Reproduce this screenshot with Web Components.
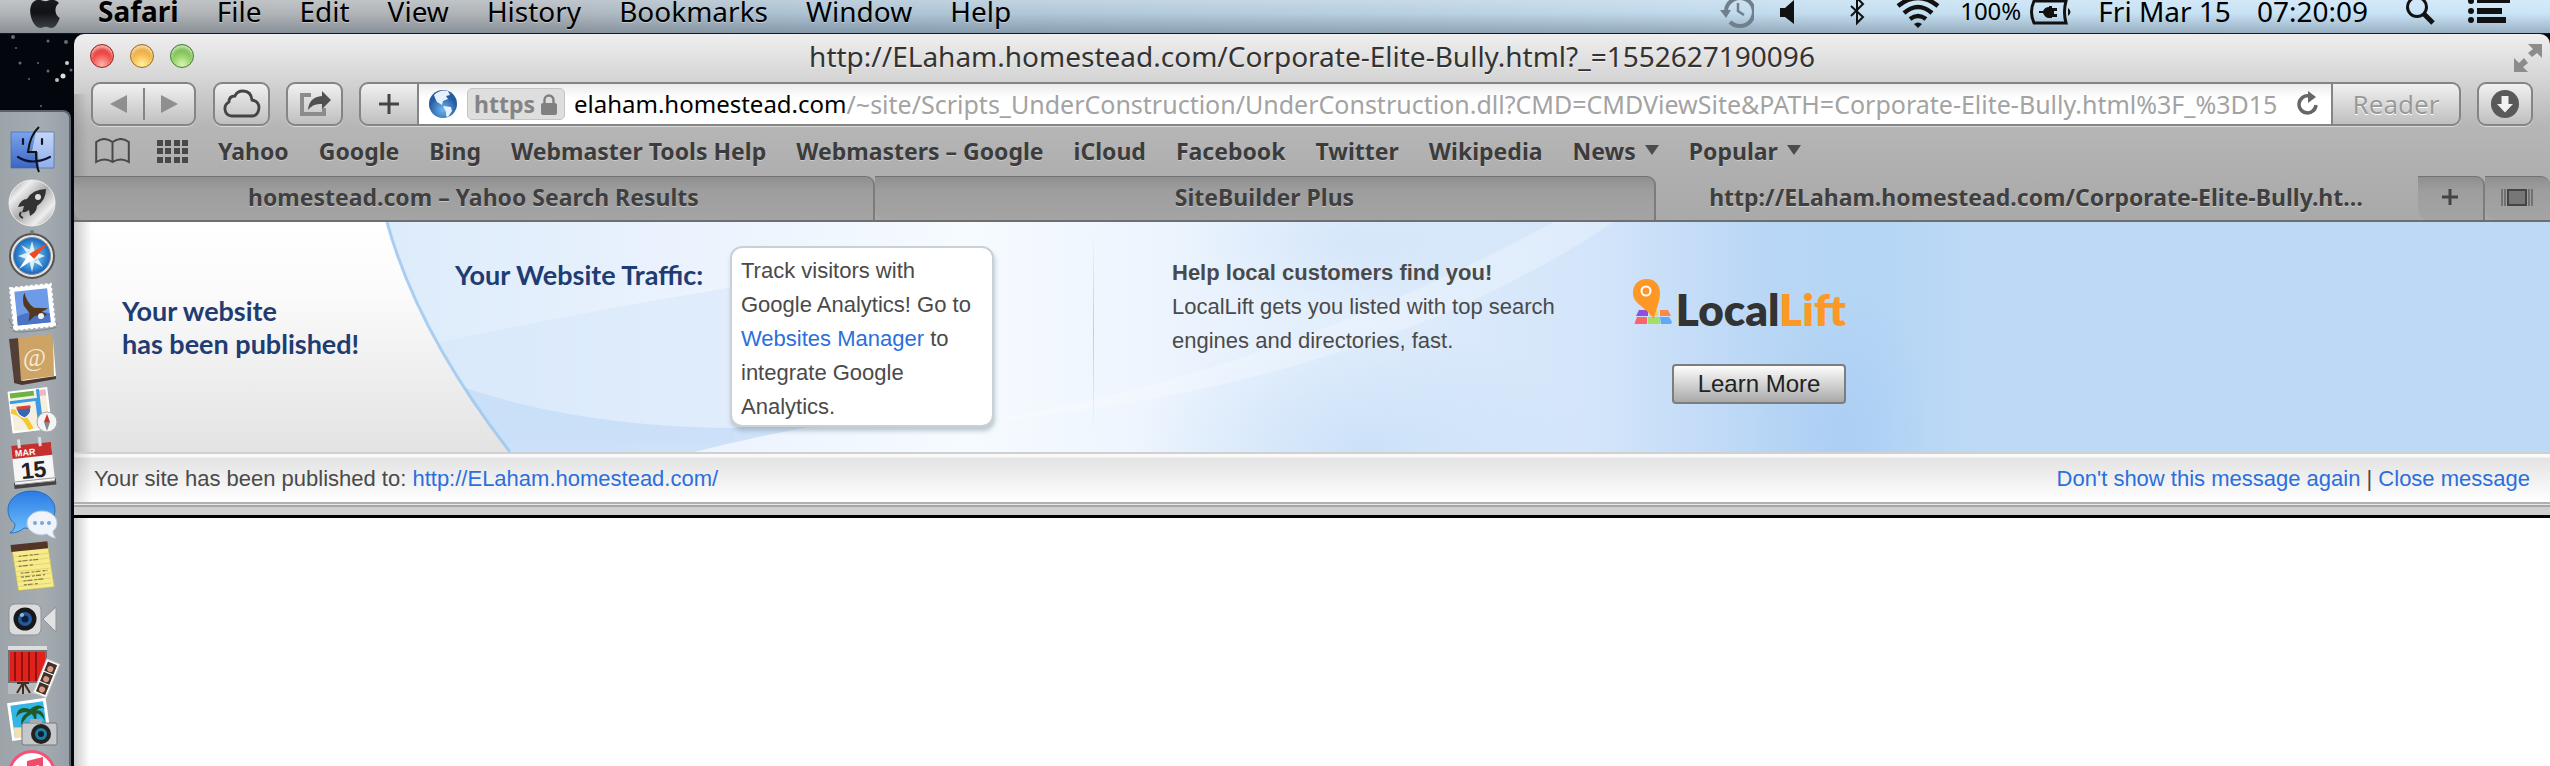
<!DOCTYPE html>
<html lang="en">
<head>
<meta charset="utf-8">
<title>Corporate Elite Bully</title>
<style>
html,body{margin:0;height:100%;overflow:hidden}
body{font-family:"Noto Sans","Open Sans",sans-serif;color:#000;background:#03070d}
</style>
</head>
<body>
<mac-desktop></mac-desktop>
<script>
function define(name, html){
  const tpl = document.createElement('template');
  tpl.innerHTML = html;
  customElements.define(name, class extends HTMLElement{
    constructor(){
      super();
      this.attachShadow({mode:'open'}).append(tpl.content.cloneNode(true));
    }
  });
}

/* ---------- menu bar ---------- */
define('menu-item', `
<style>
:host{display:block}
button{all:unset;display:block;font-size:28px;line-height:22px;white-space:nowrap;text-shadow:0 1px 0 #ffffff66}
:host([strong]) button{font-weight:700}
</style>
<button type="button"><slot></slot></button>`);

define('mac-menubar', `
<style>
:host{display:flex;align-items:flex-start;height:33px;border-bottom:1px solid #10182c;
 background:linear-gradient(#fff3 0,#fff0 40%,#2a38484d 100%),linear-gradient(90deg,#b2b5b8 0,#b0b5ba 20%,#acc3d4 32%,#b9d0e0 55%,#c3def0 72%,#cbe5f8 100%)}
nav{display:flex;gap:38px;padding-left:37px}
.status{display:flex;margin-left:auto;padding-right:40px}
svg{display:block;flex:none}
.apple{margin-left:30px}
.time{display:flex;gap:26px;font-size:28px;line-height:22px;white-space:nowrap;padding-left:26px}
.pct{font-size:24px;line-height:22px;padding:0 8px 0 20px}
.gap{padding-left:38px}
</style>
<svg class="apple" width="31" height="33" viewBox="0 0 31 33"><defs><linearGradient id="a" x2="0" y2="1"><stop offset="0" stop-color="#1a1c20"/><stop offset=".45" stop-color="#101216"/><stop offset="1" stop-color="#3b4046"/></linearGradient></defs><path fill="url(#a)" d="M29 3C27 1 25-.2 22-.2c-3 0-4 1.400-6.500 1.400S11-.2 8.500-.2C3 0 .2 5 .2 11c0 8 5 17 10 17 2.200 0 3-1.300 5.600-1.300S19 28 21.500 28c3.500 0 6.500-5 8.200-10-5-2.500-6-11-.7-15z"/></svg>
<nav>
<menu-item strong>Safari</menu-item><menu-item>File</menu-item><menu-item>Edit</menu-item><menu-item>View</menu-item><menu-item>History</menu-item><menu-item>Bookmarks</menu-item><menu-item>Window</menu-item><menu-item>Help</menu-item>
</nav>
<div class="status">
<svg width="34" height="33" viewBox="0 0 34 33" fill="none" stroke="#6f7f8c" stroke-width="4"><path d="M6 10A14 14 0 1 1 10 22"/><path d="M0 10h11l-5 8z" fill="#6f7f8c" stroke="none"/><path d="M18 3v8l6 4" stroke-width="2.500"/></svg>
<svg width="96" height="33" viewBox="0 0 96 33"><path fill="#111" d="M26 8h5l9-8v24l-9-7h-5z"/></svg>
<svg width="15" height="33" viewBox="0 0 15 33" fill="none" stroke="#111" stroke-width="2"><path d="M1 6l12 11-6 6V-2l6 6L1 16"/></svg>
<svg width="75" height="33" viewBox="0 0 75 33" fill="none" stroke="#111" stroke-width="4.500"><path d="M33 6Q53-10 73 6M39 13Q53 1 67 13M45 19Q53 13 61 19"/><path d="M49 24q4-3 8 0l-4 4z" fill="#111" stroke="none"/></svg>
<span class="pct">100%</span>
<svg width="43" height="33" viewBox="0 0 43 33"><path d="M5 1h32q-3 11 0 22H5q-5-11 0-22z" fill="none" stroke="#111" stroke-width="3"/><path fill="#111" d="M10 11h4q2-4 6-4v-1h3v2h5v3h-3v3h3v3h-5v1h-3q-4 0-6-5h-4zM39 8q5 4 0 8z"/></svg>
<span class="time"><span>Fri Mar 15</span><span>07:20:09</span></span>
<span class="gap"><svg width="30" height="33" viewBox="0 0 30 33" fill="none" stroke="#111"><circle cx="11" cy="7" r="9.500" stroke-width="3"/><path d="M18 14l9 9" stroke-width="5"/></svg></span>
<svg width="74" height="33" viewBox="0 0 74 33" fill="#111"><path d="M41-2h33v5H41zM41 8h25v6H41zM41 17h29v6H41z"/><circle cx="35" cy="1" r="3"/><circle cx="35" cy="11" r="3"/><circle cx="35" cy="20" r="3"/></svg>
</div>`);

/* ---------- dock ---------- */
define('mac-dock', `
<style>
:host{display:flex;flex-direction:column;width:74px;flex:none;background:#03070d}
.sky{height:76px;flex:none;display:block}
.shelf{flex:1;width:69px;border:solid #5a6168;border-width:2px 2px 0 0;border-radius:0 8px 0 0;
 background:linear-gradient(90deg,#9ca3a9,#a5acb1 60%,#98a0a7);padding-top:13px;overflow:hidden}
.shelf svg{display:block;width:52px;height:52px;margin-left:6px;overflow:visible}
</style>
<svg class="sky" width="74" height="76" viewBox="0 34 74 76" fill="#8d949c"><g opacity=".7"><circle cx="13" cy="37" r="2"/><circle cx="48" cy="41" r="1.500"/><circle cx="66" cy="42" r="2"/><circle cx="16" cy="48" r="1"/><circle cx="20" cy="63" r="1.500"/><circle cx="38" cy="63" r="1"/><circle cx="48" cy="71" r="1.500"/><circle cx="71" cy="70" r="1.500"/><circle cx="41" cy="106" r="1"/><circle cx="29" cy="79" r="1"/></g><circle cx="67" cy="63" r="2" fill="#ccc"/><circle cx="63" cy="76" r="2.500" fill="#ddd"/><circle cx="57" cy="80" r="2" fill="#bbb"/></svg>
<div class="shelf">
<svg viewBox="0 0 52 52"><defs><linearGradient id="f1" x2="0" y2="1"><stop offset="0" stop-color="#7aa4ec"/><stop offset="1" stop-color="#3c66c4"/></linearGradient><linearGradient id="f2" x2="0" y2="1"><stop offset="0" stop-color="#c4d6f6"/><stop offset="1" stop-color="#8fb0ea"/></linearGradient></defs><path fill="url(#f1)" d="M5 7h25l-4 20h6l1 16H5z"/><path fill="url(#f2)" d="M30 7h18v36H33l-1-16h-6z"/><path d="M5 7h43v36H5z" fill="none" stroke="#3a62b4" stroke-width=".6"/><path d="M33 2q-9 8-11 25h8q0 14 3 20" fill="none" stroke="#111" stroke-width="2"/><path d="M12 32q14 9 32 0M17 14v5M36 14v5" fill="none" stroke="#0d1430" stroke-width="2.200" stroke-linecap="round"/></svg>
<svg viewBox="0 0 52 52"><defs><linearGradient id="l" x2="1" y2="1"><stop offset="0" stop-color="#888"/><stop offset=".25" stop-color="#eee"/><stop offset=".5" stop-color="#aaa"/><stop offset=".75" stop-color="#eee"/><stop offset="1" stop-color="#888"/></linearGradient></defs><circle cx="26" cy="26" r="23" fill="url(#l)" stroke="#eee"/><path fill="#333" d="M40 12q-13 0-19 10-6 0-9 8l6-1q-1 4-2 6 3 1 7-2l1 6q7-4 7-10 9-6 9-17z"/><circle cx="32" cy="20" r="3" fill="#ddd"/><path d="M15 35q-3 4 2 6" fill="none" stroke="#333" stroke-width="2"/></svg>
<svg viewBox="0 0 52 52"><defs><radialGradient id="s"><stop offset="0" stop-color="#8fe0f8"/><stop offset="1" stop-color="#1465c0"/></radialGradient></defs><circle cx="26" cy="27" r="22" fill="#e4e4e4" stroke="#555" stroke-width="2"/><circle cx="26" cy="27" r="18.500" fill="url(#s)" stroke="#888"/><path fill="#fff" opacity=".8" d="M26 12l3 11 10 4-10 4-3 12-3-12-11-4 11-4zM15 16l9 5-3 3zM37 38l-9-5 4-3z"/><path fill="#ee4b22" d="M42 14L23 25l5 5z"/><path fill="#fff" d="M13 40l10-15 5 5z"/><circle cx="26" cy="3" r="2" fill="#777"/></svg>
<svg viewBox="0 0 52 52"><g transform="rotate(-6 26 26)"><path fill="none" stroke="#7f8790" d="M2 35a12 12 0 1 0 10-12M2 44q12 5 48 1M4 48q14 4 44 1"/><path d="M6 5h41v42H6z" fill="#fff" stroke="#fff" stroke-width="2" stroke-dasharray="3 2"/><path d="M10 9h33v34H10z" fill="#6d9be8"/><path d="M10 34q16-6 33 0v9H10z" fill="#4a74c6"/><path fill="#53381f" d="M20 11q1 10 8 16l14 2-7 3q5 2 5 4l-12-1-7 5 2-8-5-8q-1-9 2-13z"/><circle cx="34" cy="36" r="3" fill="#eee"/></g></svg>
<svg viewBox="0 0 52 52"><path fill="#543f36" d="M3 6l11-1 3 45-9-2z"/><path fill="#cda466" d="M12 5l34-4 3 43-34 4z"/><path fill="#fff" d="M47 6l3 38-33 5v-2l31-4z"/><path fill="#4d382f" d="M8 47l8 1 34-5v3l-34 6-8-2z"/><text x="17" y="33" font-family="Liberation Serif" font-size="25" fill="#f4ead6">@</text></svg>
<svg viewBox="0 0 52 52"><g transform="rotate(-7 26 26)"><path fill="#f4efdf" stroke="#fff" stroke-width="2" d="M5 5h38v40H5z"/><path fill="#6cb344" d="M6 6h24v5H6z"/><path fill="#e9b9c8" d="M35 6h7v6h-7z"/><path d="M5 15h27v24M34 5v40" fill="none" stroke="#3d9be0" stroke-width="3"/><path d="M5 24q12 2 18 20" fill="none" stroke="#f7c72f" stroke-width="5"/><path fill="#3867b4" stroke="#fff" d="M11 21h14q1 8-7 11-8-3-7-11z"/><path fill="#d94336" d="M11 20h14v3H11z"/></g><circle cx="41" cy="37" r="10" fill="#f4f4f4" stroke="#aaa"/><path fill="#d9302a" d="M41 29l3 8h-6z"/><path fill="#888" d="M41 46l3-9h-6z"/></svg>
<svg viewBox="0 0 52 52"><g transform="rotate(-6 26 26)"><path fill="#444" d="M6 44l42 0v6H6z"/><path fill="#f6f6f6" d="M7 8h40v38H7z"/><path fill="#c4302f" d="M7 7h40v13H7z"/><path d="M15 1v9M36 1v9" stroke="#ddd" stroke-width="3"/><path d="M7 43h40M7 46h40" stroke="#999"/><text x="10" y="18" font-family="Liberation Sans" font-size="9" font-weight="700" fill="#fff">MAR</text><text x="14" y="41" font-family="Liberation Sans" font-size="23" font-weight="700" fill="#222">15</text></g></svg>
<svg viewBox="0 0 52 52"><defs><linearGradient id="m" x2="0" y2="1"><stop offset="0" stop-color="#2a7be6"/><stop offset="1" stop-color="#6fc0fa"/></linearGradient></defs><path fill="url(#m)" stroke="#1d5fb8" stroke-width=".8" d="M26 2C12 2 2 10 2 21c0 6 3 11 7 14 0 4-2 7-5 9 6 0 11-2 14-5 20 3 31-7 31-18S39 2 26 2z"/><path fill="#eef4fa" stroke="#b8c8d8" d="M36 22c-9 0-15 6-15 12s6 12 15 12l5-1c2 2 5 4 9 4-2-2-3-4-3-7 3-2 4-5 4-8 0-6-6-12-15-12z"/><g fill="#7da7d4"><circle cx="29" cy="34" r="2"/><circle cx="36" cy="34" r="2"/><circle cx="43" cy="34" r="2"/></g></svg>
<svg viewBox="0 0 52 52"><g transform="rotate(-6 26 26)"><path fill="#f7ec8a" stroke="#c8b84e" stroke-width=".6" d="M8 6h36l2 42H10z"/><path fill="#54352a" d="M7 2h37v7H7z"/><path d="M10 14h34M10 19h34M10 24h34M10 29h34M10 34h34M10 39h34M10 44h34" stroke="#d9cb70" stroke-width=".7"/><path d="M14 14h22M13 19h20M13 24h14M14 31h27M14 35h24M16 39h20M16 43h14" stroke="#8a7c48" stroke-width="1.200" stroke-dasharray="3 1 5 2"/></g></svg>
<svg viewBox="0 0 52 52"><rect x="3" y="11" width="32" height="31" rx="6" fill="#dcdcdc" stroke="#8d9195"/><path fill="#e2e2e2" stroke="#8d9195" d="M37 26l13-12v25z"/><circle cx="19" cy="26" r="11.500" fill="#17181c"/><circle cx="19" cy="26" r="7" fill="#245a9a"/><circle cx="19" cy="26" r="3.500" fill="#0d1f3c"/><circle cx="16" cy="22" r="2" fill="#8fb9e6"/></svg>
<svg viewBox="0 0 52 52"><path fill="#6e7175" d="M2 1h39v47H2z"/><path fill="#b9bcbf" d="M2 38h39v11H2z"/><path fill="#e0221c" d="M4 7h35v29H4z"/><path d="M9 7v29M16 7v29M23 7v29M30 7v29" stroke="#94100d" stroke-width="2"/><path fill="#ddd" d="M2 1h39v4H2z"/><path d="M11 38h12M17 38l-6 10M18 38l6 10M17 38v11" stroke="#442d1d" stroke-width="2"/><g transform="rotate(22 40 32)"><path fill="#fff" stroke="#ccc" d="M34 15h14v36H34z"/><path fill="#44302b" d="M36 17h10v10H36zM36 28h10v10H36zM36 39h10v10H36z"/><g fill="#d79c84"><circle cx="41" cy="23" r="3"/><circle cx="41" cy="34" r="3"/><circle cx="41" cy="45" r="3"/></g></g></svg>
<svg viewBox="0 0 52 52"><g transform="rotate(-8 26 26)"><path fill="#fff" d="M4 3h39v38H4z"/><path fill="#35b4e6" d="M7 6h33v32H7z"/><path fill="#f0dfb0" d="M7 28l33 4v7H7z"/><path fill="#1e5a2a" d="M26 12q-12-6-15 6 5-5 12-3-8 3-8 12 5-8 12-10 3 4 2 14l3-14q5 2 7 9 1-12-7-12 6-3 9 0-5-8-15-2z"/></g><rect x="16" y="26" width="35" height="22" rx="2" fill="#c4c8cb" stroke="#777"/><path fill="#a6abaf" d="M24 22h12v4H24z"/><circle cx="35" cy="37" r="10" fill="#222"/><circle cx="35" cy="37" r="6" fill="#1f7da0"/><circle cx="35" cy="37" r="3" fill="#0a2030"/></svg>
<svg viewBox="0 0 52 52"><circle cx="26" cy="25" r="22.500" fill="#fff" stroke="#f4527a" stroke-width="3"/><path fill="#ef4b6c" d="M21 12l16-4v22h-4V16l-9 2v16h-3z"/></svg>
</div>`);

/* ---------- toolbar pieces ---------- */
define('tool-button', `
<style>
:host{display:block;flex:none}
button{box-sizing:border-box;display:flex;align-items:center;justify-content:center;height:44px;width:100%;margin:0;padding:0;
 border:2px solid #858585;border-radius:9px;background:linear-gradient(#f1f1f1,#bfbfbf);box-shadow:0 1px 0 #ffffff80;font:inherit}
:host([start]) button{border-radius:9px 0 0 9px}
:host([end]) button{border-radius:0 9px 9px 0}
</style>
<button type="button"><slot></slot></button>`);

define('bookmark-link', `
<style>
:host{display:block}
a{display:flex;align-items:center;gap:9px;color:#3c3c3c;text-decoration:none;font-size:23px;font-weight:700;line-height:30px;white-space:nowrap;text-shadow:0 1px 0 #ffffff59}
svg{display:none;margin-top:-2px}
:host([menu]) svg{display:block}
</style>
<a href="#"><slot></slot><svg width="14" height="10" viewBox="0 0 14 10"><path d="M0 0h14L7 10z" fill="#4c4c4c"/></svg></a>`);

define('browser-tab', `
<style>
:host{display:flex;min-width:0;box-sizing:border-box;align-items:center;justify-content:center;height:44px;padding-bottom:3px;
 border-top:1px solid #727272;border-right:2px solid #7c7c7c;border-radius:0 9px 0 10px;
 background:linear-gradient(#8f8f8f,#9e9e9e 14px,#a4a4a4)}
:host([active]){background:none;border-color:transparent}
button{all:unset;color:#3f3f3f;font-size:23px;font-weight:700;line-height:32px;white-space:nowrap;overflow:hidden;text-overflow:ellipsis;text-shadow:0 1px 0 #ffffff66}
::slotted(svg){display:block}
</style>
<button type="button"><slot></slot></button>`);

define('safari-chrome', `
<style>
:host{display:block;height:188px;border-radius:10px 10px 0 0;
 background:linear-gradient(90deg,#0002,#0000 14px) 0 60px no-repeat,linear-gradient(#efefef 0,#d3d3d3 48px,#b6b6b6 92px,#adadad 150px,#a9a9a9 100%);overflow:hidden}
svg{display:block;flex:none}
.title{display:grid;grid-template-columns:1fr auto 1fr;align-items:center;height:48px}
.lights{display:flex;gap:16px;padding-left:16px;margin-top:-4px}
.lights button{box-sizing:border-box;width:24px;height:24px;padding:0;border-radius:50%;border:1px solid}
.r{background:radial-gradient(circle at 50% 90%,#ffb4ad,#ef4a47 50%,#d93a3a);border-color:#9c2626!important;box-shadow:inset 0 3px 3px #fff9}
.y{background:radial-gradient(circle at 50% 90%,#fff2a4,#f3b84a 50%,#db9433);border-color:#a06a20!important;box-shadow:inset 0 3px 3px #fff9}
.g{background:radial-gradient(circle at 50% 90%,#d7f5b0,#8bcb60 50%,#62a944);border-color:#47812d!important;box-shadow:inset 0 3px 3px #fff9}
h1{margin:0;margin-top:-4px;font-size:28px;font-weight:400;line-height:40px;color:#333;text-shadow:0 1px 0 #ffffff99;white-space:nowrap}
.full{justify-self:end;padding-right:8px}
.tools{display:flex;padding:0 17px;height:44px}
.back{width:105px;margin-right:17px}.w58{width:57px;margin-right:16px}.plus{width:60px}.reader{width:130px;margin-right:16px}.dl{width:56px}
.field{flex:1;min-width:0;box-sizing:border-box;display:flex;align-items:center;height:44px;border:solid #858585;border-width:2px 0;
 background:linear-gradient(#ececec,#fff 14px);padding:0 12px 0 10px;box-shadow:0 1px 0 #ffffff80}
.https{display:flex;align-items:center;gap:6px;box-sizing:border-box;height:32px;margin-left:10px;padding:0 7px 0 6px;border:1px solid #c4c4c4;border-radius:5px;background:#dedede;color:#848484;font-size:23px;font-weight:700}
label{margin-left:9px;font-size:24px;line-height:36px}
input{flex:1;min-width:0;border:0;padding:0;margin:0 14px 0 0;background:none;outline:0;font:inherit;font-size:25px;line-height:36px;height:36px;color:#a3a3a3}
.rd{font-size:26px;color:#9a9a9a;text-shadow:0 1px 0 #fff}
.marks{display:flex;align-items:center;height:50px;padding-left:21px}
.grid{margin:0 30px 0 27px}
.list{display:flex;gap:30px}
.tabs{display:flex;height:44px;border-bottom:2px solid #6e6e6e}
.t1{flex:41}.t2{flex:40}.t3{flex:39}.t4{width:67px}.t5{width:65px;border-right:0}
</style>
<div class="title">
 <div class="lights"><button class="r" aria-label="Close"></button><button class="y" aria-label="Minimise"></button><button class="g" aria-label="Zoom"></button></div>
 <h1>http://ELaham.homestead.com/Corporate-Elite-Bully.html?_=1552627190096</h1>
 <svg class="full" width="28" height="30" viewBox="0 0 28 30" fill="#8c8c8c"><path d="M14 1h14v14l-5-5-5 4-4-4 5-4zM0 15l5 5 5-5 4 5-5 4 5 5H0z"/></svg>
</div>
<div class="tools">
 <tool-button class="back"><svg width="72" height="34" viewBox="0 0 72 34"><path d="M19 8v18L2 17zM53 8v18l17-9z" fill="#8f8f8f"/><path d="M36 1v32" stroke="#858585" stroke-width="2"/></svg></tool-button>
 <tool-button class="w58"><svg width="40" height="30" viewBox="0 0 40 30"><path d="M9 27a7.500 7.500 0 0 1-2-14q0-6 6-6 2-5 8-5 8 0 9 9 7 1 7 8-1 8-7 8z" fill="none" stroke="#444" stroke-width="2.800"/></svg></tool-button>
 <tool-button class="w58"><svg width="34" height="30" viewBox="0 0 34 30"><path d="M13 6H4v19h22v-6" fill="none" stroke="#8c8c8c" stroke-width="4"/><path d="M24 2l9 9-9 9v-5q-9-1-14 6 1-13 14-14z" fill="#505050"/></svg></tool-button>
 <tool-button class="plus" start><svg width="22" height="22" viewBox="0 0 22 22"><path d="M11 1v20M1 11h20" stroke="#454545" stroke-width="3"/></svg></tool-button>
 <div class="field">
  <svg width="28" height="30" viewBox="0 0 28 30"><defs><radialGradient id="g" cy=".7"><stop offset="0" stop-color="#6db8f6"/><stop offset="1" stop-color="#245b9f"/></radialGradient></defs><circle cx="14" cy="15" r="14" fill="url(#g)"/><path fill="#e6f1fb" d="M5 6q6-6 14-4l2 4-4 1 2 3-5 2-1 4-5-3-2-4zM14 17l8 1 1 4-4 6-2-1v-4z"/></svg>
  <span class="https">https<svg width="16" height="21" viewBox="0 0 16 21"><rect y="9" width="16" height="12" rx="2" fill="#808080"/><path d="M3.500 10V6a4.500 4.500 0 0 1 9 0v4" fill="none" stroke="#808080" stroke-width="2.400"/></svg></span>
  <label for="u">elaham.homestead.com</label><input id="u" type="text" value="/~site/Scripts_UnderConstruction/UnderConstruction.dll?CMD=CMDViewSite&amp;PATH=Corporate-Elite-Bully.html%3F_%3D15">
  <svg width="22" height="26" viewBox="0 0 22 26"><path d="M12 5a8.500 8.500 0 1 0 7 9" fill="none" stroke="#666" stroke-width="3.500"/><path d="M11 0l8 6-8 6z" fill="#666"/></svg>
 </div>
 <tool-button class="reader" end><span class="rd">Reader</span></tool-button>
 <tool-button class="dl"><svg width="28" height="28" viewBox="0 0 28 28"><circle cx="14" cy="14" r="14" fill="#595959"/><path d="M10.500 6h7v8h4.500l-8 8.500L6 14h4.500z" fill="#f2f2f2"/></svg></tool-button>
</div>
<div class="marks">
 <svg width="35" height="26" viewBox="0 0 35 26"><path d="M17.500 4v20M1.200 4Q9-2 17.500 4 26-2 33.800 4v20q-8-5-16.300 0-8-5-16.300 0z" fill="none" stroke="#484848" stroke-width="2"/></svg>
 <svg class="grid" width="31" height="23" viewBox="0 0 31 23" fill="#484848"><path d="M0 0h6v6H0zM8 0h6v6H8zM17 0h6v6h-6zM25 0h6v6h-6zM0 8h6v6H0zM8 8h6v6H8zM17 8h6v6h-6zM25 8h6v6h-6zM0 17h6v6H0zM8 17h6v6H8zM17 17h6v6h-6zM25 17h6v6h-6z"/></svg>
 <nav class="list"><bookmark-link>Yahoo</bookmark-link><bookmark-link>Google</bookmark-link><bookmark-link>Bing</bookmark-link><bookmark-link>Webmaster Tools Help</bookmark-link><bookmark-link>Webmasters – Google</bookmark-link><bookmark-link>iCloud</bookmark-link><bookmark-link>Facebook</bookmark-link><bookmark-link>Twitter</bookmark-link><bookmark-link>Wikipedia</bookmark-link><bookmark-link menu>News</bookmark-link><bookmark-link menu>Popular</bookmark-link></nav>
</div>
<div class="tabs">
 <browser-tab class="t1">homestead.com – Yahoo Search Results</browser-tab>
 <browser-tab class="t2">SiteBuilder Plus</browser-tab>
 <browser-tab class="t3" active>http://ELaham.homestead.com/Corporate-Elite-Bully.ht…</browser-tab>
 <browser-tab class="t4"><svg width="16" height="16" viewBox="0 0 16 16"><path d="M8 0v16M0 8h16" stroke="#444" stroke-width="3"/></svg></browser-tab>
 <browser-tab class="t5"><svg width="32" height="17" viewBox="0 0 32 17"><rect x="7" y="1" width="18" height="15" fill="#777" stroke="#444" stroke-width="2"/><path d="M1 0v17M4 0v17M28 0v17M31 0v17" stroke="#444"/></svg></browser-tab>
</div>`);

/* ---------- page content ---------- */
define('info-card', `
<style>
:host{display:block;box-sizing:border-box;border:2px solid #c9d0d6;border-radius:12px;background:#fff;box-shadow:1px 4px 4px #8595a580;padding:6px 9px 2px;line-height:34px}
</style><slot></slot>`);

define('locallift-logo', `
<style>
:host{display:flex;align-items:flex-end}
svg{display:block;flex:none}
span{font-family:Lato,sans-serif;font-weight:800;font-size:44px;line-height:44px;color:#333;margin:0 0 -6px 3px;white-space:nowrap}
b{font-weight:inherit;color:#fd9827}
</style>
<svg width="40" height="46" viewBox="0 0 40 46"><path fill="#8c4fe0" d="M6 31h9v6H3z"/><path fill="#f4d648" d="M16 31h9v6h-9z"/><path fill="#f58a4b" d="M27 31h8l3 6H27z"/><path fill="#f9646c" d="M4 38h10v7H3q-2 0-1-2z"/><path fill="#9fe065" d="M15 38h12v7H15z"/><path fill="#62a9f5" d="M27 38h9l3 5q0 2-2 2h-9z"/><path fill="#ff9727" d="M14 0C5 0 0 6 0 14c0 11 12 13 21 26 1-8 6-16 6-26C27 6 22 0 14 0z"/><circle cx="13" cy="12" r="4.500" fill="none" stroke="#fff" stroke-width="2"/></svg>
<span>Local<b>Lift</b></span>`);

define('publish-banner', `
<style>
:host{display:flex;position:relative;height:230px;overflow:hidden;font-family:"Liberation Sans",Arial,sans-serif;font-size:22px;line-height:34px;color:#4a4a4a;background:#bdd9f6}
.bg{position:absolute;left:0;top:0;width:1902px;height:100%}
.c{position:relative;flex:none}
h2,h3{margin:0;font-family:Lato,sans-serif;font-weight:700;font-size:27px;line-height:33px;color:#213c72}
.pub{width:333px;padding:72px 0 0 48px}
.traffic{width:275px;padding-top:36px}
info-card{width:264px;height:181px;margin:24px 99px 0 0}
hr{width:1px;height:200px;border:0;margin:10px 78px 0 0;background:linear-gradient(#c3ced900,#c0ccd8,#c3ced900)}
.help{width:463px;padding-top:34px}
p{margin:0;width:400px}
.lift{width:211px;padding-top:57px;display:flex;flex-direction:column;align-items:flex-end}
a{color:#2b6fdc;text-decoration:none}
.lift button{margin:39px 0 0;box-sizing:border-box;width:174px;height:40px;padding:0;border:2px solid #7d7d7d;border-radius:4px;background:linear-gradient(#fdfdfd,#a9a9a9);font:24px/34px "Liberation Sans",Arial,sans-serif;color:#222}
</style>
<svg class="bg" viewBox="0 0 1902 230" preserveAspectRatio="none">
<defs>
<linearGradient id="b"><stop offset=".16" stop-color="#dcebfb"/><stop offset=".35" stop-color="#edf4fe"/><stop offset=".47" stop-color="#f5fbfe"/><stop offset=".56" stop-color="#eef5fe"/><stop offset=".68" stop-color="#e0edfc"/><stop offset=".8" stop-color="#d3e5fa"/><stop offset=".89" stop-color="#b9d6f6"/><stop offset=".95" stop-color="#b5d6f5"/><stop offset="1" stop-color="#bdd9f6"/></linearGradient>
<linearGradient id="w" x2="0" y2="1"><stop offset="0" stop-color="#fff"/><stop offset=".3" stop-color="#fbfbfb"/><stop offset="1" stop-color="#e3e3e3"/></linearGradient>
<linearGradient id="sh"><stop offset="0" stop-color="#0003"/><stop offset="1" stop-color="#0000"/></linearGradient>
<radialGradient id="p"><stop offset="0" stop-color="#a8cbf3"/><stop offset="1" stop-color="#a8cbf300"/></radialGradient>
<radialGradient id="q"><stop offset="0" stop-color="#c3dcf7"/><stop offset="1" stop-color="#c3dcf700"/></radialGradient>
</defs>
<path fill="url(#b)" d="M0 0h1902v230H0z"/>
<path fill="#d3e6f9" opacity=".5" d="M345 125Q480 95 660 65V220H400z"/>
<path fill="#c6ddf8" opacity=".8" d="M380 162Q500 205 660 206L900 180Q760 195 620 230H430z"/>
<ellipse cx="1290" cy="230" rx="230" ry="130" fill="url(#q)" opacity=".7"/>
<ellipse cx="1280" cy="20" rx="170" ry="70" fill="url(#q)" opacity=".4"/>
<ellipse cx="1770" cy="210" rx="90" ry="150" fill="url(#p)" opacity=".7"/>
<path fill="#fff" opacity=".25" d="M930 195Q1200 150 1480 0h60Q1300 160 930 198z"/>
<path fill="url(#w)" d="M0 0h312q30 110 123 230H0z"/>
<path fill="none" stroke="#9cc5ee" stroke-width="3" opacity=".8" d="M313 0q30 110 123 230"/>
<path fill="url(#sh)" d="M0 0h18v230H0z"/>
</svg>
<div class="c pub"><h2>Your website<br>has been published!</h2></div>
<div class="c traffic"><h3>Your Website Traffic:</h3></div>
<info-card class="c">Track visitors with Google Analytics! Go to <a href="#">Websites Manager</a> to integrate Google Analytics.</info-card>
<hr class="c">
<div class="c help"><strong>Help local customers find you!</strong><p>LocalLift gets you listed with top search engines and directories, fast.</p></div>
<div class="c lift"><locallift-logo></locallift-logo><button type="button">Learn More</button></div>`);

define('status-strip', `
<style>
:host{display:block;font-family:"Liberation Sans",Arial,sans-serif;font-size:22px;color:#4a4a4a}
.row{display:flex;justify-content:space-between;height:45px;line-height:44px;padding:3px 20px 0;border-top:2px solid #d0d0d0;
 background:linear-gradient(90deg,#0002,#0000 18px),linear-gradient(#fafafa 3px,#e3e3e3 4px,#fff)}
.edge{height:5px;border-top:2px solid #b0b0b0;border-bottom:2px solid #a6a6a6;box-sizing:border-box;background:#e8e8e8}
.foot{height:8px;background:#cfcfcf;border-bottom:3px solid #000}
a{color:#2b6fdc;text-decoration:none}
</style>
<div class="row"><span>Your site has been published to: <a href="#">http://ELaham.homestead.com/</a></span><span><a href="#">Don't show this message again</a> | <a href="#">Close message</a></span></div>
<div class="edge"></div><div class="foot"></div>`);

define('safari-window', `
<style>
:host{display:flex;flex-direction:column;flex:1;min-width:0}
main{flex:1;background:linear-gradient(90deg,#0003,#0000 16px) #fff;display:block}
</style>
<safari-chrome></safari-chrome>
<main><publish-banner></publish-banner><status-strip></status-strip></main>`);

define('mac-desktop', `
<style>
:host{display:flex;flex-direction:column;height:100vh;overflow:hidden}
.work{flex:1;min-height:0;display:flex}
</style>
<mac-menubar></mac-menubar>
<div class="work"><mac-dock></mac-dock><safari-window></safari-window></div>`);
</script>
</body>
</html>
